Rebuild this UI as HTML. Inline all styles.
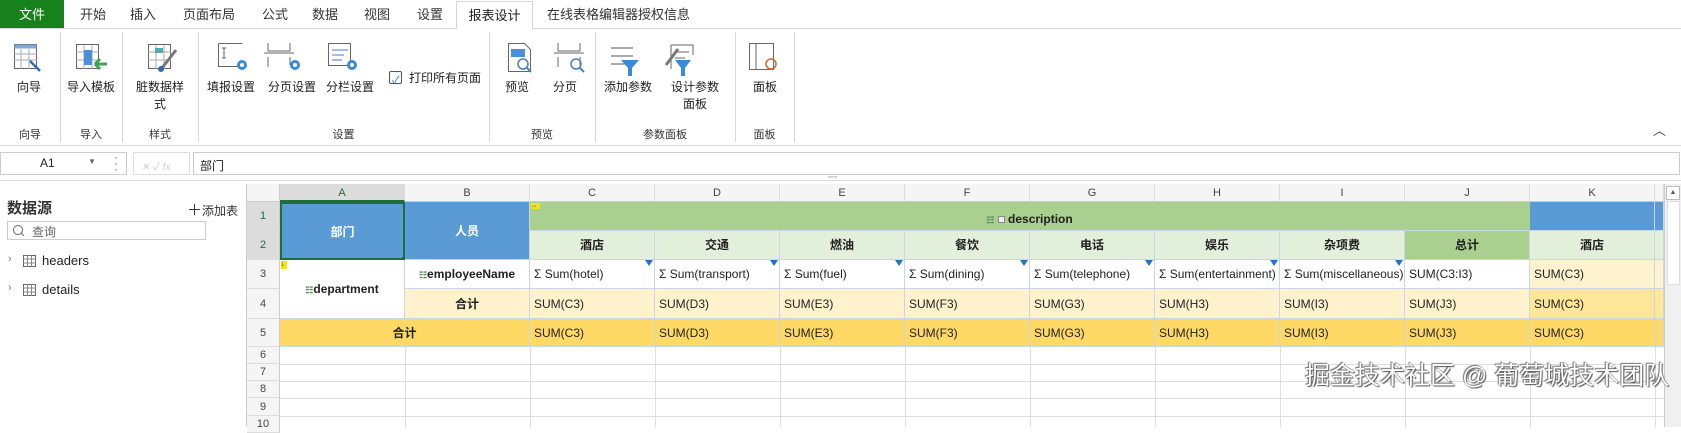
<!DOCTYPE html>
<html><head><meta charset="utf-8">
<style>
*{box-sizing:border-box;margin:0;padding:0}
body{width:1681px;height:427px;overflow:hidden;background:#fff;font-family:"Liberation Sans","Noto Sans CJK SC",sans-serif;font-size:12px;color:#222;position:relative}
.a{position:absolute}
.tab{position:absolute;top:0;height:28px;line-height:29px;font-size:13px;color:#333}
.lbl{position:absolute;font-size:12px;color:#222;text-align:center;line-height:17px}
.glbl{position:absolute;top:126px;font-size:11px;color:#333;text-align:center}
.sep{position:absolute;top:32px;width:1px;height:110px;background:#d8d8d8}
.ch{position:absolute;top:184px;height:18px;line-height:18px;text-align:center;font-size:11px;color:#444;background:#f5f5f5;border-right:1px solid #dcdcdc;border-bottom:1px solid #ccc}
.rh{position:absolute;left:247px;width:33px;text-align:center;font-size:11px;color:#444;background:#f5f5f5;border-bottom:1px solid #dcdcdc;border-right:1px solid #ccc}
.c{position:absolute;border-right:1px solid #c9d6e3;border-bottom:1px solid #c9d6e3;font-size:12px;white-space:nowrap;overflow:hidden}
.ctr{text-align:center;font-weight:bold}
.l{padding-left:4px}
.tri{position:absolute;right:1px;top:0;width:0;height:0;border-left:4px solid transparent;border-right:4px solid transparent;border-top:6px solid #2a6fc9}
.gl{position:absolute;height:1px;background:#dedede}
.vl{position:absolute;width:1px;background:#dedede}
</style></head><body>

<!-- tab bar -->
<div class="a" style="left:0;top:0;width:64px;height:28px;background:#17821c;color:#fff;font-size:13px;text-align:center;line-height:29px">文件</div>
<div class="tab" style="left:80px">开始</div>
<div class="tab" style="left:130px">插入</div>
<div class="tab" style="left:183px">页面布局</div>
<div class="tab" style="left:262px">公式</div>
<div class="tab" style="left:312px">数据</div>
<div class="tab" style="left:364px">视图</div>
<div class="tab" style="left:417px">设置</div>
<div class="a" style="left:0;top:28px;width:1681px;height:1px;background:#d4d4d4"></div>
<div class="a" style="left:456px;top:1px;width:77px;height:28px;background:#fff;border:1px solid #d4d4d4;border-bottom:none;text-align:center;line-height:28px;font-size:13px">报表设计</div>
<div class="tab" style="left:547px">在线表格编辑器授权信息</div>

<!-- ribbon -->
<div class="sep" style="left:60px"></div>
<div class="sep" style="left:122px"></div>
<div class="sep" style="left:198px"></div>
<div class="sep" style="left:489px"></div>
<div class="sep" style="left:595px"></div>
<div class="sep" style="left:735px"></div>
<div class="sep" style="left:794px"></div>
<div class="a" style="left:0;top:145px;width:1681px;height:1px;background:#d4d4d4"></div>

<!-- icons -->
<svg class="a" style="left:0;top:40px" width="800" height="40">
 <g fill="none" stroke="#666" stroke-width="1">
  <rect x="14.5" y="4.5" width="22" height="24" fill="#fff"/><rect x="14.5" y="4.5" width="22" height="4" fill="#7ea8d8" stroke="none"/>
  <path d="M14 14h23M14 20h23M21 9v20M29 9v20" stroke="#aaa"/>
  <path d="M30 21l10 10" stroke="#2e6bb5" stroke-width="2.5"/>
  <rect x="76.5" y="4.5" width="22" height="24" fill="#fff"/><path d="M76 12h23M76 20h23M84 5v24M92 5v24" stroke="#aaa"/><rect x="84" y="10" width="8" height="15" fill="#4a90d9" stroke="none"/>
  <path d="M107 24h-12M95 24l5-5M95 24l5 5" stroke="#3aa655" stroke-width="3"/>
  <rect x="148.5" y="4.5" width="22" height="24" fill="#fff"/><path d="M148 12h23M148 20h23M156 5v24M164 5v24" stroke="#aaa"/><rect x="155" y="8" width="8" height="5" fill="#5aa" stroke="none"/>
  <path d="M176 10l-14 18" stroke="#777" stroke-width="3"/><circle cx="161" cy="29" r="3" fill="#2e6bb5" stroke="none"/>
  <path d="M218.5 3.5v23h24M218.5 3.5h24M224 8v10M222 8h4M222 18h4"/>
  <path d="M268 3v8h22v-8M264 13h30M268 17v10M290 17v8" />
  <rect x="328.5" y="3.5" width="22" height="22"/><path d="M332 10h16M332 15h12M332 20h10" stroke="#4a7fc0"/>
  <path d="M558 3v8h22v-8M554 13h30M558 17v10M580 17v8"/>
  <path d="M611 8h22M611 16h22M611 24h16" stroke="#555"/>
  <path d="M671 5h22v10M671 5v24M675 12h14M675 18h10" />
 </g>
 <g fill="#3b8ad8">
  <circle cx="242" cy="25" r="5"/><circle cx="295" cy="25" r="5"/><circle cx="352" cy="25" r="5"/>
  <path d="M621 20h18l-7 8v8h-4v-8z"/><path d="M675 20h16l-6 8v8h-4v-8z"/>
 </g>
 <g fill="#fff"><circle cx="242" cy="25" r="2"/><circle cx="295" cy="25" r="2"/><circle cx="352" cy="25" r="2"/></g>
 <g fill="none" stroke="#666">
  <path d="M508.5 3.5h16l6 6v22h-22z" fill="#fff"/><rect x="511" y="9" width="14" height="8" fill="#4a90d9" stroke="none"/>
  <circle cx="523" cy="24" r="5" stroke="#4a7fc0" stroke-width="1.5"/><path d="M527 28l4 4" stroke="#4a7fc0" stroke-width="2"/>
  <circle cx="576" cy="24" r="5" stroke="#4a7fc0" stroke-width="1.5"/><path d="M580 28l4 4" stroke="#4a7fc0" stroke-width="2"/>
  <path d="M678 9l-12 16" stroke="#777" stroke-width="3"/>
  <path d="M749.5 3.5h24v26h-24zM756 4v26"/><circle cx="771" cy="24" r="5" stroke="#e06030" stroke-width="1.5"/>
 </g>
</svg>
<div class="a" style="left:389px;top:71px;width:13px;height:13px;border:1px solid #555;border-radius:2px"></div>
<div class="a" style="left:392px;top:72px;font-size:11px;color:#2a6fc9">✓</div>
<div class="lbl" style="left:409px;top:70px">打印所有页面</div>

<div class="lbl" style="left:0;top:79px;width:58px">向导</div>
<div class="lbl" style="left:62px;top:79px;width:58px">导入模板</div>
<div class="lbl" style="left:130px;top:79px;width:60px">脏数据样<br>式</div>
<div class="lbl" style="left:203px;top:79px;width:56px">填报设置</div>
<div class="lbl" style="left:264px;top:79px;width:56px">分页设置</div>
<div class="lbl" style="left:322px;top:79px;width:56px">分栏设置</div>
<div class="lbl" style="left:494px;top:79px;width:46px">预览</div>
<div class="lbl" style="left:542px;top:79px;width:46px">分页</div>
<div class="lbl" style="left:598px;top:79px;width:60px">添加参数</div>
<div class="lbl" style="left:662px;top:79px;width:66px">设计参数<br>面板</div>
<div class="lbl" style="left:738px;top:79px;width:54px">面板</div>

<div class="glbl" style="left:0;width:60px">向导</div>
<div class="glbl" style="left:60px;width:62px">导入</div>
<div class="glbl" style="left:122px;width:76px">样式</div>
<div class="glbl" style="left:198px;width:291px">设置</div>
<div class="glbl" style="left:489px;width:106px">预览</div>
<div class="glbl" style="left:595px;width:140px">参数面板</div>
<div class="glbl" style="left:735px;width:59px">面板</div>
<div class="a" style="left:1653px;top:120px;font-size:13px;color:#444">︿</div>

<!-- formula bar -->
<div class="a" style="left:0;top:152px;width:127px;height:23px;border:1px solid #ccc"></div>
<div class="a" style="left:40px;top:156px;font-size:12px">A1</div>
<div class="a" style="left:88px;top:157px;font-size:8px;color:#666">▼</div>
<div class="a" style="left:114px;top:154px;font-size:12px;color:#666;line-height:6px">·<br>·<br>·</div>
<div class="a" style="left:133px;top:152px;width:57px;height:23px;border:1px solid #ddd;color:#ccc;font-size:10px;padding:5px 0 0 8px">✕ ✓ <i>fx</i></div>
<div class="a" style="left:193px;top:152px;width:1487px;height:23px;border:1px solid #ccc;padding:4px 0 0 6px;font-size:12px">部门</div>
<div class="a" style="left:827px;top:174px;font-size:8px;color:#777;letter-spacing:-1px">::::::::</div>
<div class="a" style="left:0;top:180px;width:1681px;height:1px;background:#ddd"></div>

<!-- left panel -->
<div class="a" style="left:7px;top:197px;font-size:15px;font-weight:bold;color:#333">数据源</div>
<div class="a" style="left:187px;top:199px;font-size:12px;color:#333"><span style="font-size:15px">＋</span>添加表</div>
<div class="a" style="left:7px;top:221px;width:199px;height:19px;border:1px solid #ccc"></div>
<svg class="a" style="left:12px;top:224px" width="14" height="14"><circle cx="6" cy="6" r="4.5" fill="none" stroke="#666"/><path d="M9 9l3 3" stroke="#666"/></svg>
<div class="a" style="left:32px;top:223px;font-size:12px;color:#666">查询</div>
<div class="a" style="left:8px;top:253px;font-size:11px;color:#777">›</div>
<div class="a" style="left:8px;top:282px;font-size:11px;color:#777">›</div>
<svg class="a" style="left:23px;top:255px" width="14" height="12"><rect x=".5" y=".5" width="12" height="11" fill="none" stroke="#666"/><path d="M0 4h13M0 8h13M4.5 0v12M8.5 0v12" stroke="#888"/></svg>
<svg class="a" style="left:23px;top:284px" width="14" height="12"><rect x=".5" y=".5" width="12" height="11" fill="none" stroke="#666"/><path d="M0 4h13M0 8h13M4.5 0v12M8.5 0v12" stroke="#888"/></svg>
<div class="a" style="left:42px;top:253px;font-size:13px">headers</div>
<div class="a" style="left:42px;top:282px;font-size:13px">details</div>
<div class="a" style="left:246px;top:184px;width:1px;height:243px;background:#ccc"></div>

<!-- grid background lines rows 6-10 -->
<div class="gl" style="left:280px;top:364px;width:1384px"></div>
<div class="gl" style="left:280px;top:381px;width:1384px"></div>
<div class="gl" style="left:280px;top:398px;width:1384px"></div>
<div class="gl" style="left:280px;top:416px;width:1384px"></div>
<div class="vl" style="left:405px;top:347px;height:80px"></div>
<div class="vl" style="left:530px;top:347px;height:80px"></div>
<div class="vl" style="left:655px;top:347px;height:80px"></div>
<div class="vl" style="left:780px;top:347px;height:80px"></div>
<div class="vl" style="left:905px;top:347px;height:80px"></div>
<div class="vl" style="left:1030px;top:347px;height:80px"></div>
<div class="vl" style="left:1155px;top:347px;height:80px"></div>
<div class="vl" style="left:1280px;top:347px;height:80px"></div>
<div class="vl" style="left:1405px;top:347px;height:80px"></div>
<div class="vl" style="left:1530px;top:347px;height:80px"></div>
<div class="vl" style="left:1655px;top:184px;height:243px"></div>

<!-- column headers -->
<div class="a" style="left:247px;top:184px;width:33px;height:18px;background:#f5f5f5;border-right:1px solid #ccc;border-bottom:1px solid #ccc"></div>
<div class="ch" style="left:280px;width:125px;background:#dcdcdc;color:#1e6e3a;border-bottom:2px solid #1e6e3a">A</div>
<div class="ch" style="left:405px;width:125px">B</div>
<div class="ch" style="left:530px;width:125px">C</div>
<div class="ch" style="left:655px;width:125px">D</div>
<div class="ch" style="left:780px;width:125px">E</div>
<div class="ch" style="left:905px;width:125px">F</div>
<div class="ch" style="left:1030px;width:125px">G</div>
<div class="ch" style="left:1155px;width:125px">H</div>
<div class="ch" style="left:1280px;width:125px">I</div>
<div class="ch" style="left:1405px;width:125px">J</div>
<div class="ch" style="left:1530px;width:125px">K</div>
<div class="ch" style="left:1655px;width:9px"></div>

<!-- row headers -->
<div class="rh" style="top:202px;height:29px;line-height:29px;background:#dcdcdc;color:#1e6e3a">1</div>
<div class="rh" style="top:231px;height:29px;line-height:29px;background:#dcdcdc;color:#1e6e3a">2</div>
<div class="rh" style="top:260px;height:29px;line-height:29px">3</div>
<div class="rh" style="top:289px;height:30px;line-height:30px">4</div>
<div class="rh" style="top:319px;height:28px;line-height:28px">5</div>
<div class="rh" style="top:347px;height:17px;line-height:17px">6</div>
<div class="rh" style="top:364px;height:17px;line-height:17px">7</div>
<div class="rh" style="top:381px;height:17px;line-height:17px">8</div>
<div class="rh" style="top:398px;height:18px;line-height:18px">9</div>
<div class="rh" style="top:416px;height:17px;line-height:17px">10</div>

<!-- rows 1-2 -->
<div class="c ctr" style="left:280px;top:202px;width:125px;height:58px;line-height:56px;background:#5b9bd5;color:#fff;border:2px solid #1e6e3a">部门</div>
<div class="a" style="left:402px;top:257px;width:6px;height:6px;background:#1e6e3a"></div>
<div class="c ctr" style="left:405px;top:202px;width:125px;height:58px;line-height:58px;background:#5b9bd5;color:#fff">人员</div>
<div class="c" style="left:530px;top:202px;width:1000px;height:29px;background:#a9d08e;border-right:1px solid #a9d08e;text-align:center;line-height:34px;font-weight:bold;font-size:12px"><span style="color:#5a8a5a;font-size:9px">☷</span> <span style="display:inline-block;width:7px;height:7px;background:#eee;border:1px solid #888;vertical-align:middle"></span> description</div>
<div class="a" style="left:531px;top:203px;width:9px;height:6px;background:#f4e21a;font-size:6px;line-height:6px">→</div>
<div class="c" style="left:1530px;top:202px;width:125px;height:29px;background:#5b9bd5"></div>
<div class="c" style="left:1655px;top:202px;width:9px;height:29px;background:#5b9bd5"></div>
<div class="c ctr" style="left:530px;top:231px;width:125px;height:29px;line-height:29px;background:#e2efda">酒店</div>
<div class="c ctr" style="left:655px;top:231px;width:125px;height:29px;line-height:29px;background:#e2efda">交通</div>
<div class="c ctr" style="left:780px;top:231px;width:125px;height:29px;line-height:29px;background:#e2efda">燃油</div>
<div class="c ctr" style="left:905px;top:231px;width:125px;height:29px;line-height:29px;background:#e2efda">餐饮</div>
<div class="c ctr" style="left:1030px;top:231px;width:125px;height:29px;line-height:29px;background:#e2efda">电话</div>
<div class="c ctr" style="left:1155px;top:231px;width:125px;height:29px;line-height:29px;background:#e2efda">娱乐</div>
<div class="c ctr" style="left:1280px;top:231px;width:125px;height:29px;line-height:29px;background:#e2efda">杂项费</div>
<div class="c ctr" style="left:1405px;top:231px;width:125px;height:29px;line-height:29px;background:#a9d08e">总计</div>
<div class="c ctr" style="left:1530px;top:231px;width:125px;height:29px;line-height:29px;background:#e2efda">酒店</div>
<div class="c" style="left:1655px;top:231px;width:9px;height:29px;background:#e2efda"></div>

<!-- row 3-4 -->
<div class="c ctr" style="left:280px;top:260px;width:125px;height:59px;line-height:59px;background:#fff"><span style="color:#5a8a5a;font-size:9px">☷</span>department</div>
<div class="a" style="left:281px;top:261px;width:6px;height:8px;background:#f4e21a;font-size:7px;line-height:8px">↓</div>
<div class="a" style="left:406px;top:261px;width:6px;height:8px;background:#f4e21a;font-size:7px;line-height:8px">↓</div>
<div class="c ctr" style="left:405px;top:260px;width:125px;height:29px;line-height:29px;background:#fff"><span style="color:#5a8a5a;font-size:9px">☷</span>employeeName</div>
<div class="c l" style="left:530px;top:260px;width:125px;height:29px;line-height:29px">Σ Sum(hotel)<i class="tri"></i></div>
<div class="c l" style="left:655px;top:260px;width:125px;height:29px;line-height:29px">Σ Sum(transport)<i class="tri"></i></div>
<div class="c l" style="left:780px;top:260px;width:125px;height:29px;line-height:29px">Σ Sum(fuel)<i class="tri"></i></div>
<div class="c l" style="left:905px;top:260px;width:125px;height:29px;line-height:29px">Σ Sum(dining)<i class="tri"></i></div>
<div class="c l" style="left:1030px;top:260px;width:125px;height:29px;line-height:29px">Σ Sum(telephone)<i class="tri"></i></div>
<div class="c l" style="left:1155px;top:260px;width:125px;height:29px;line-height:29px">Σ Sum(entertainment)<i class="tri"></i></div>
<div class="c l" style="left:1280px;top:260px;width:125px;height:29px;line-height:29px">Σ Sum(miscellaneous)<i class="tri"></i></div>
<div class="c l" style="left:1405px;top:260px;width:125px;height:29px;line-height:29px">SUM(C3:I3)</div>
<div class="c l" style="left:1530px;top:260px;width:125px;height:29px;line-height:29px;background:#fff3cf">SUM(C3)</div>
<div class="c" style="left:1655px;top:260px;width:9px;height:29px;background:#fff3cf"></div>

<div class="c ctr" style="left:405px;top:289px;width:125px;height:30px;line-height:30px;background:#fff2cc">合计</div>
<div class="c l" style="left:530px;top:289px;width:125px;height:30px;line-height:30px;background:#fff2cc">SUM(C3)</div>
<div class="c l" style="left:655px;top:289px;width:125px;height:30px;line-height:30px;background:#fff2cc">SUM(D3)</div>
<div class="c l" style="left:780px;top:289px;width:125px;height:30px;line-height:30px;background:#fff2cc">SUM(E3)</div>
<div class="c l" style="left:905px;top:289px;width:125px;height:30px;line-height:30px;background:#fff2cc">SUM(F3)</div>
<div class="c l" style="left:1030px;top:289px;width:125px;height:30px;line-height:30px;background:#fff2cc">SUM(G3)</div>
<div class="c l" style="left:1155px;top:289px;width:125px;height:30px;line-height:30px;background:#fff2cc">SUM(H3)</div>
<div class="c l" style="left:1280px;top:289px;width:125px;height:30px;line-height:30px;background:#fff2cc">SUM(I3)</div>
<div class="c l" style="left:1405px;top:289px;width:125px;height:30px;line-height:30px;background:#fff2cc">SUM(J3)</div>
<div class="c l" style="left:1530px;top:289px;width:125px;height:30px;line-height:30px;background:#ffe699">SUM(C3)</div>
<div class="c" style="left:1655px;top:289px;width:9px;height:30px;background:#ffe699"></div>

<!-- row 5 -->
<div class="c ctr" style="left:280px;top:319px;width:250px;height:28px;line-height:28px;background:#ffd966">合计</div>
<div class="c l" style="left:530px;top:319px;width:125px;height:28px;line-height:28px;background:#ffd966">SUM(C3)</div>
<div class="c l" style="left:655px;top:319px;width:125px;height:28px;line-height:28px;background:#ffd966">SUM(D3)</div>
<div class="c l" style="left:780px;top:319px;width:125px;height:28px;line-height:28px;background:#ffd966">SUM(E3)</div>
<div class="c l" style="left:905px;top:319px;width:125px;height:28px;line-height:28px;background:#ffd966">SUM(F3)</div>
<div class="c l" style="left:1030px;top:319px;width:125px;height:28px;line-height:28px;background:#ffd966">SUM(G3)</div>
<div class="c l" style="left:1155px;top:319px;width:125px;height:28px;line-height:28px;background:#ffd966">SUM(H3)</div>
<div class="c l" style="left:1280px;top:319px;width:125px;height:28px;line-height:28px;background:#ffd966">SUM(I3)</div>
<div class="c l" style="left:1405px;top:319px;width:125px;height:28px;line-height:28px;background:#ffd966">SUM(J3)</div>
<div class="c l" style="left:1530px;top:319px;width:125px;height:28px;line-height:28px;background:#ffd966">SUM(C3)</div>
<div class="c" style="left:1655px;top:319px;width:9px;height:28px;background:#ffd966"></div>

<!-- scrollbar -->
<div class="a" style="left:1664px;top:184px;width:17px;height:243px;background:#f0f0f0;border-left:1px solid #ccc"></div>
<div class="a" style="left:1666px;top:186px;width:14px;height:14px;border:1px solid #bbb;background:#fff;font-size:7px;text-align:center;line-height:12px;color:#555">▲</div>
<div class="a" style="left:1667px;top:201px;width:13px;height:84px;background:#fff;border:1px solid #ddd"></div>

<!-- watermark -->
<div class="a" style="left:1305px;top:356px;font-size:25px;color:#fff;letter-spacing:0px;text-shadow:0 0 1px #555,1px 1px 1px #555,-1px -1px 1px #777;white-space:nowrap">掘金技术社区 @ 葡萄城技术团队</div>
</body></html>
